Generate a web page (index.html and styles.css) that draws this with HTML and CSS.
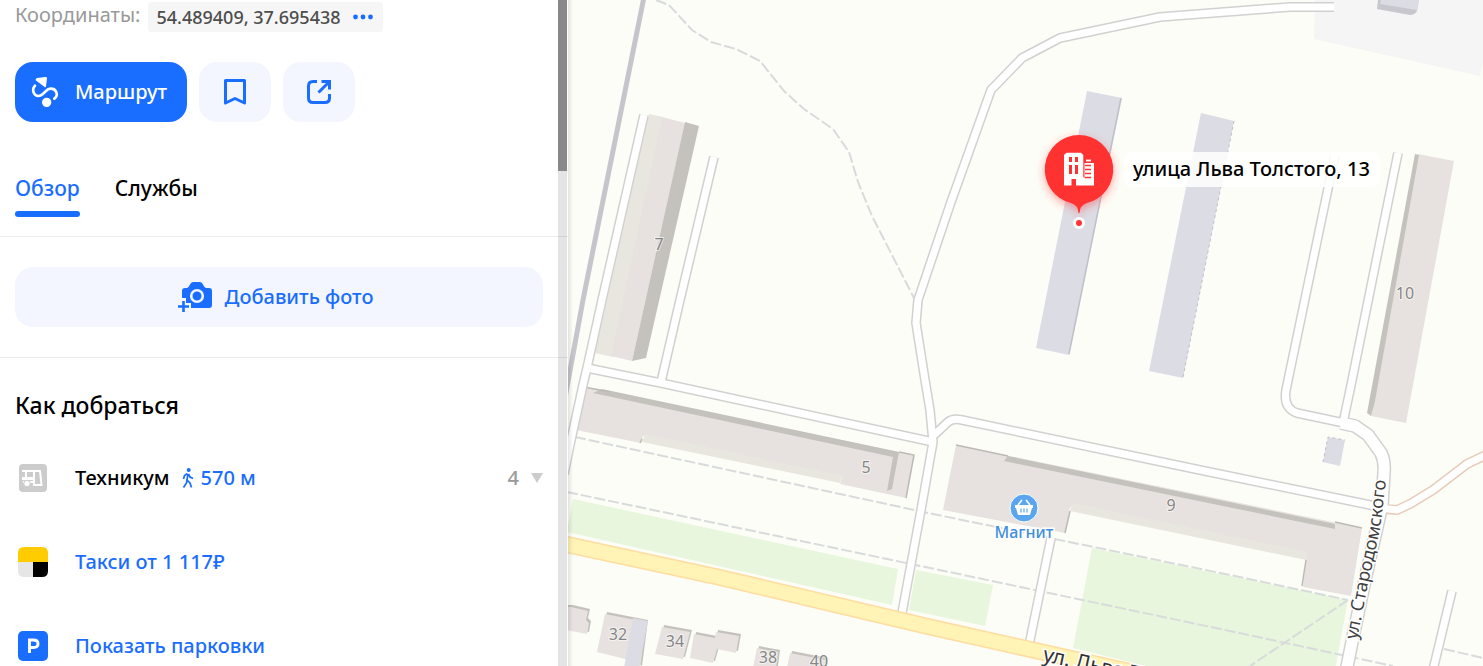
FILE: index.html
```html
<!DOCTYPE html>
<html lang="ru">
<head>
<meta charset="utf-8">
<meta name="viewport" content="width=device-width, initial-scale=1">
<title>улица Льва Толстого, 13</title>
<link rel="stylesheet" href="styles.css">
</head>
<body>
<div class="app">
  <aside class="sidebar">
    <div class="coords">
      <span class="coords-label">Координаты:</span>
      <button class="coords-chip" type="button">
        <span>54.489409, 37.695438</span>
        <svg class="dots" viewBox="0 0 20 6" aria-hidden="true"><circle cx="2.500" cy="3" r="2.400"/><circle cx="10" cy="3" r="2.400"/><circle cx="17.500" cy="3" r="2.400"/></svg>
      </button>
    </div>

    <div class="actions">
      <button class="btn btn-primary" type="button">
        <svg class="icon-route" viewBox="90 225 90 102" aria-hidden="true">
          <path d="M107 241Q106 236 111 234L136 231Q141 230 141 235L138 259Q137 264 133 260Z" fill="#fff"/>
          <path d="M105 257C92 272 105 294 123 286C134 281 138 267 151 266C169 265 177 285 163 296" fill="none" stroke="#fff" stroke-width="8" stroke-linecap="round"/>
          <circle cx="140" cy="307" r="14" fill="#fff"/>
        </svg>
        <span>Маршрут</span>
      </button>
      <button class="btn btn-square" type="button" aria-label="Сохранить">
        <svg class="icon-action" viewBox="0 0 26 26" aria-hidden="true"><path d="M3.500 1.500H22.500V24L13 19.500L3.500 24Z" fill="none" stroke="#196dff" stroke-width="3" stroke-linejoin="round"/></svg>
      </button>
      <button class="btn btn-square" type="button" aria-label="Поделиться">
        <svg class="icon-action" viewBox="0 0 26 26" aria-hidden="true"><path d="M11 2.500H7Q2.500 2.500 2.500 7V19Q2.500 23.500 7 23.500H19Q23.500 23.500 23.500 19V15M12.500 13.500L22.500 3.500M15.500 2.500H23.500V10.500" fill="none" stroke="#196dff" stroke-width="3"/></svg>
      </button>
    </div>

    <nav class="tabs">
      <a class="tab tab-active" href="#overview">Обзор</a>
      <a class="tab" href="#services">Службы</a>
    </nav>

    <section class="photos">
      <button class="btn btn-wide" type="button">
        <svg class="icon-camera" viewBox="0 0 36 32" aria-hidden="true">
          <path d="M5 15V10Q5 7 8 7H10Q12 6 13 3.500Q14 1 16 1H23Q25 1 26 3.500Q27 6 29 7H32Q35 7 35 10V24Q35 27 32 27H14V22H9V17H5Z" fill="#196dff"/>
          <circle cx="20" cy="15" r="5.800" fill="none" stroke="#f3f6fe" stroke-width="2.600"/>
          <path d="M1 25.500H12M6.500 20V31" stroke="#196dff" stroke-width="2.600"/>
        </svg>
        <span>Добавить фото</span>
      </button>
    </section>

    <section class="directions">
      <h2 class="section-title">Как добраться</h2>
      <div class="route-row">
        <svg class="row-icon" viewBox="0 0 30 30" aria-hidden="true">
          <rect x="1" y="1" width="28" height="28" rx="4" fill="#ccc"/>
          <path d="M4 8H22L23.500 22H16V9M8 8V15M5 19H15" fill="none" stroke="#fff" stroke-width="2"/>
          <path d="M4 15.500H16" stroke="#fff" stroke-width="3"/>
          <circle cx="9" cy="20.500" r="3.200" fill="#fff" stroke="#ccc" stroke-width="1"/>
        </svg>
        <span class="stop">Техникум</span>
        <a class="walk" href="#walk">
          <svg class="icon-walk" viewBox="0 0 12 20" aria-hidden="true"><circle cx="6.700" cy="2" r="2"/><path d="M6 6L5 12L8 15L9.500 19.500M5 12L4.500 15L1.500 19.500M5.500 5.500L2.500 7.500L1.500 11M6.500 6L8 9L11 10.500" fill="none" stroke="#196dff" stroke-width="1.700"/></svg>
          <span>570 м</span>
        </a>
        <button class="more-stops" type="button"><span>4</span><svg class="icon-down" viewBox="0 0 12 10" aria-hidden="true"><path d="M0 0H12L6 10Z" fill="#ccc"/></svg></button>
      </div>
      <a class="route-row" href="#taxi">
        <svg class="row-icon" viewBox="0 0 30 30" aria-hidden="true">
          <path d="M0 15V6Q0 0 6 0H24Q30 0 30 6V15Z" fill="#fc0"/><path d="M0 15H15V30H6Q0 30 0 24Z" fill="#e6e6e6"/><path d="M15 15H30V24Q30 30 24 30H15Z"/>
        </svg>
        <span>Такси от 1 117₽</span>
      </a>
      <a class="route-row" href="#parking">
        <svg class="row-icon" viewBox="0 0 30 30" aria-hidden="true">
          <rect width="30" height="30" rx="5" fill="#196dff"/>
          <path d="M11.500 22V9H15.500Q20 9 20 12.700T15.500 16.500H11.500" fill="none" stroke="#fff" stroke-width="2.900"/>
        </svg>
        <span>Показать парковки</span>
      </a>
    </section>
    <div class="scroll-track" aria-hidden="true"><div class="scroll-thumb"></div></div>
  </aside>

  <main class="map">
    <svg class="map-canvas" viewBox="568 0 915 666" preserveAspectRatio="xMinYMin slice" role="img" aria-label="Карта">
      <defs>
        <path id="street" d="M1357 640L1368 584L1380 530L1386 480"/>
        <filter id="glow" x="-40%" y="-40%" width="180%" height="180%"><feDropShadow dx="0" dy="3" stdDeviation="4" flood-color="#f33" flood-opacity=".45"/></filter>
      </defs>

      <path class="yard" d="M1315 0L1314 39L1480 76L1483 63V0Z"/>
      <path class="lav-side" d="M1378 0L1377 9L1410 15Q1415 15 1417 11L1419 0Z"/>
      <path class="lav" d="M1381 0L1380 4L1417 10L1419 0Z"/>

      <g class="green">
        <path d="M573 499L898 569L892 605L567 532Z"/>
        <path d="M916 570L993 585L985 626L909 610Z"/>
        <path d="M1092 548L1348 600L1335 670H1162L1073 648Z"/>
      </g>

      <g class="path">
        <path d="M656 0L669 5L692 30L711 42L736 49L760 61L784 91L804 109L833 129L849 152L858 182L872 216L915 300"/>
        <path d="M575 437L933 514L1230 575L1348 600"/>
        <path d="M567 492L930 568L1230 631L1393 666"/>
        <path d="M1348 600L1250 666"/>
        <path d="M1444 649L1483 658"/>
      </g>

      <path d="M644 -3L583 300L565 398" fill="none" stroke="#c6c5cc" stroke-width="5"/>

      <path class="pale" d="M649 114L663 117L613 357L595 353Z"/>
      <path class="house" d="M662 117L685 123L632 361L611 356Z"/>
      <path class="shade" d="M685 122L699 126L646 358L632 361Z"/>

      <path class="house" d="M584 387L914 455L906 498L840 484L842 477L643 436L641 443L576 430Z"/>
      <path class="pale" d="M645 434L842 476L840 483L642 442Z"/>
      <path class="shade" d="M593 393L602 389L899 452L892 489L887 491L893 457Z"/>
      <path class="edge" d="M584 387L610 392M899 452L914 455L906 498M640 443L642 439"/>

      <path class="house" d="M956 445L1362 528L1351 596L1303 587L1306 556L1070 507L1065 533L943 510Z"/>
      <path class="pale" d="M1072 503L1307 552L1306 560L1070 511Z"/>
      <path class="shade" d="M1004 461L1008 456L1335 524V529Z"/>
      <path class="edge" d="M956 445L1008 456M1335 522L1362 528M1070 511L1065 533M1306 560L1302 586"/>

      <path class="house" d="M1418 154L1454 161L1406 423L1371 416Z"/>
      <path class="shade" d="M1415 154L1419 155L1375 401L1371 416L1367 413Z"/>

      <path class="lav" d="M1087 91L1122 98L1069 355L1036 348Z"/>
      <path class="lav-edge" d="M1121 98L1069 354"/>
      <path class="lav" d="M1201 113L1234 121L1183 378L1149 371Z"/>
      <path class="lav-edge dotted" d="M1234 121L1183 377"/>
      <path class="lav" d="M1328 437L1345 440L1340 466L1323 462Z"/>
      <path class="lav-edge dotted" d="M1323 462L1328 437L1345 440"/>

      <g class="cottage">
        <path d="M571 607L588 611L586 620L589 623L587 634L566 630V607Z"/>
        <path d="M605 614L646 622L640 668L629 660L597 652Z"/>
        <path d="M662 627L690 632L683 659L655 654Z"/>
        <path d="M694 634L715 638L716 632L739 636L736 653L717 649L713 663L690 658Z"/>
        <path d="M757 648L778 652L776 668H753Z"/>
        <path d="M790 653L826 660L824 668H787Z"/>
      </g>
      <path class="lav" d="M633 618L648 621L639 668H624Z"/>

      <g class="casing">
        <path d="M644 115L602 300L587 368L583 385L571 440L564 474"/>
        <path d="M714 157L680 300L661 382"/>
        <path d="M587 368L661 383L933 442"/>
        <path d="M1334 7H1290L1160 17L1060 38L1022 58L991 90L951 202L918 300L916 323L925 380L930 410L933 442L921 510L902 613"/>
        <path d="M933 436L948 422Q953 418 962 420L1200 470L1375 506"/>
        <path d="M1335 155L1286 390Q1283 408 1297 413L1344 423"/>
        <path d="M1398 153L1350 390L1343 423"/>
        <path d="M1452 591L1433 670"/>
        <path d="M1051 538L1029 645"/>
      </g>
      <path class="track-casing" d="M1384 509L1397 510L1410 504L1433 490L1467 464L1490 453"/>
      <path class="main-casing" d="M1341 423L1355 426L1368 435L1381 453Q1385 461 1384 473L1382 505L1365 580L1353 637L1346 672"/>
      <g class="lane">
        <path d="M644 115L602 300L587 368L583 385L571 440L564 474"/>
        <path d="M714 157L680 300L661 382"/>
        <path d="M587 368L661 383L933 442"/>
        <path d="M1334 7H1290L1160 17L1060 38L1022 58L991 90L951 202L918 300L916 323L925 380L930 410L933 442L921 510L902 613"/>
        <path d="M933 436L948 422Q953 418 962 420L1200 470L1375 506"/>
        <path d="M1335 155L1286 390Q1283 408 1297 413L1344 423"/>
        <path d="M1398 153L1350 390L1343 423"/>
        <path d="M1452 591L1433 670"/>
        <path d="M1051 538L1029 645"/>
        <path d="M1380 508L1397 510L1410 504L1433 490L1467 464L1490 453"/>
      </g>
      <path class="main-lane" d="M1341 423L1355 426L1368 435L1381 453Q1385 461 1384 473L1382 505L1365 580L1353 637L1346 672"/>
      <path class="avenue-casing" d="M560 543L718 577L930 627L1190 685"/>
      <path class="avenue" d="M560 543L718 577L930 627L1190 685"/>

      <g class="number">
        <text x="659" y="250">7</text><text x="866" y="473">5</text><text x="1171" y="511">9</text><text x="1405" y="299">10</text>
        <text x="618" y="640">32</text><text x="675" y="647">34</text><text x="768" y="663">38</text><text x="819" y="667">40</text>
      </g>
      <text class="street-name"><textPath href="#street">ул. Стародомского</textPath></text>
      <text class="avenue-name" transform="translate(1042 661) rotate(12)">ул. Льва Толстого</text>

      <circle cx="1024" cy="508" r="14" fill="#5aa5f0" stroke="#fff" stroke-width="1"/>
      <path d="M1015 505H1033V508H1032L1030 515H1018L1016 508H1015Z" fill="#fff"/>
      <path d="M1018 505L1022 500M1030 505L1026 500" stroke="#fff" stroke-width="1.600"/>
      <path d="M1021 508.500V512.500M1024 508.500V512.500M1027 508.500V512.500" stroke="#5aa5f0" stroke-width="1.200"/>
      <text class="shop" x="1024" y="538">Магнит</text>

      <rect x="1124" y="152" width="256" height="35" rx="8" fill="#fff" fill-opacity=".85"/>
      <text class="pin-label" x="1133" y="176">улица Льва Толстого, 13</text>
      <path d="M1079 135A34.500 34.500 0 0 1 1087 203Q1080 205 1079.500 213H1078.500Q1078 205 1071 203A34.500 34.500 0 0 1 1079 135Z" fill="#f33" filter="url(#glow)"/>
      <circle cx="1079" cy="223" r="6" fill="#fff"/><circle cx="1079" cy="223" r="3" fill="#f33"/>
      <path fill="#fff" fill-rule="evenodd" d="M1064 185.600V155L1066.500 152.700H1081L1083.300 155V177L1084.500 178.500V163H1094V185.600H1076V179H1071.500V185.600ZM1069 157V162H1072V157ZM1075 157V162H1078V157ZM1069 165V174H1072V165ZM1075 165V174H1078V165Z"/>
      <path d="M1086 160.500H1091" stroke="#fff" stroke-width="1.800"/>
      <path d="M1085 165.500H1091M1085 169.500H1091M1085 173.500H1091M1085 177.500H1091" stroke="#f33" stroke-width="1.300"/>
    </svg>
  </main>
</div>
</body>
</html>
```
FILE: styles.css
```css
* { box-sizing: border-box; }
body { margin: 0; font-family: "Noto Sans", "Open Sans", sans-serif; font-size: 20px; line-height: 24px; color: #000; }
a { color: #196dff; text-decoration: none; }
button { font: inherit; border: 0; padding: 0; cursor: pointer; }
svg { display: block; flex: none; }

.app { display: flex; height: 100vh; overflow: hidden; }

.sidebar { position: relative; flex: none; width: 568px; padding-top: 2px; background: #fff; font-weight: 500; overflow: hidden; }
.coords { display: flex; align-items: center; gap: 8px; height: 30px; padding: 0 15px; }
.coords-label { font-weight: 400; color: #999; padding-bottom: 4px; }
.coords-chip { display: flex; align-items: center; gap: 12px; height: 30px; padding: 0 10px 0 8px; border-radius: 3px; background: #f6f6f6; color: #4d4d4d; font-size: 18px; }
.dots { width: 20px; height: 6px; fill: #196dff; }

.actions { display: flex; gap: 12px; padding: 30px 15px 0; }
.btn { display: flex; align-items: center; justify-content: center; height: 60px; border-radius: 18px; background: #f3f6fe; color: #196dff; }
.btn-primary { gap: 15px; justify-content: flex-start; padding: 0 18px 0 15px; background: #196dff; color: #fff; width: 172px; }
.btn-square { width: 72px; }
.btn-wide { gap: 12px; width: 100%; padding-right: 8px; }
.icon-route { width: 30px; height: 34px; }
.icon-action { width: 26px; height: 26px; }
.icon-camera { width: 36px; height: 32px; }

.tabs { display: flex; gap: 35px; height: 115px; padding: 54px 15px 0; border-bottom: 1px solid #ebebeb; font-size: 21px; }
.tab { position: relative; height: 41px; color: #000; }
.tab-active { color: #196dff; }
.tab-active::after { content: ""; position: absolute; right: 0; bottom: 0; left: 0; height: 6px; border-radius: 3px; background: #196dff; }

.photos { padding: 30px 25px 30px 15px; border-bottom: 1px solid #ebebeb; }
.directions { padding: 35px 25px 0 15px; }
.section-title { margin: 0 0 19px; font-size: 23px; line-height: 24px; font-weight: 500; }
.route-row { display: flex; align-items: center; height: 84px; padding-left: 3px; }
.row-icon { width: 30px; height: 30px; margin-right: 27px; }
.walk { display: flex; align-items: center; gap: 7px; margin-left: 12px; }
.icon-walk { width: 12px; height: 20px; fill: #196dff; }
.more-stops { display: flex; align-items: center; gap: 12px; margin-left: auto; background: none; color: #999; }
.icon-down { width: 12px; height: 10px; }

.scroll-track { position: absolute; top: 0; right: 1px; bottom: 0; width: 9px; background: #0000001b; }
.scroll-thumb { height: 171px; background: #898989; }

.map { flex: 1; min-width: 0; background: #fcfdf6; position: relative; }
.map::after { content: ""; position: absolute; top: 0; bottom: 0; left: 0; width: 5px; background: linear-gradient(to right, #0000001a, #0000); }
.map-canvas { width: 100%; height: 100%; }
.yard { fill: #f5f5f5; }
.green { fill: #e8f6dd; }
.house { fill: #e7e2df; }
.pale { fill: #e9e6df; }
.shade { fill: #c5c2bd; }
.edge { fill: none; stroke: #bdb9b4; stroke-width: 1.5; }
.lav { fill: #dcdce4; }
.lav-side { fill: #c8c7ce; }
.lav-edge { fill: none; stroke: #c0c0ca; stroke-width: 1.5; }
.dotted { stroke-dasharray: 3 3; stroke-width: 1; }
.cottage { fill: #e7e2df; filter: drop-shadow(2px -2px 0 #c5c2bd); }
.path { fill: none; stroke: #d8dbdb; stroke-width: 2; stroke-dasharray: 11 3; }
.casing, .track-casing, .main-casing, .avenue-casing, .lane, .main-lane, .avenue { fill: none; stroke-linejoin: round; }
.casing { stroke: #d1d1d1; stroke-width: 10; }
.lane { stroke: #fff; stroke-width: 7; }
.track-casing { stroke: #e8cbb9; stroke-width: 10; }
.main-casing { stroke: #d1d1d1; stroke-width: 14; }
.main-lane { stroke: #fff; stroke-width: 11; }
.avenue-casing { stroke: #ffdca0; stroke-width: 17; }
.avenue { stroke: #fff3b5; stroke-width: 14; }
.number { font-size: 16px; fill: #858585; stroke: #fff9; stroke-width: 2; paint-order: stroke; text-anchor: middle; }
.street-name { font-size: 18px; fill: #404040; stroke: #fff; stroke-width: 3; paint-order: stroke; }
.avenue-name { font-size: 21px; fill: #333; stroke: #fff; stroke-width: 3; paint-order: stroke; }
.shop { font-size: 16px; font-weight: 500; fill: #3f8edc; stroke: #fff; stroke-width: 3; paint-order: stroke; text-anchor: middle; }
.pin-label { font-size: 20px; font-weight: 500; }
```
